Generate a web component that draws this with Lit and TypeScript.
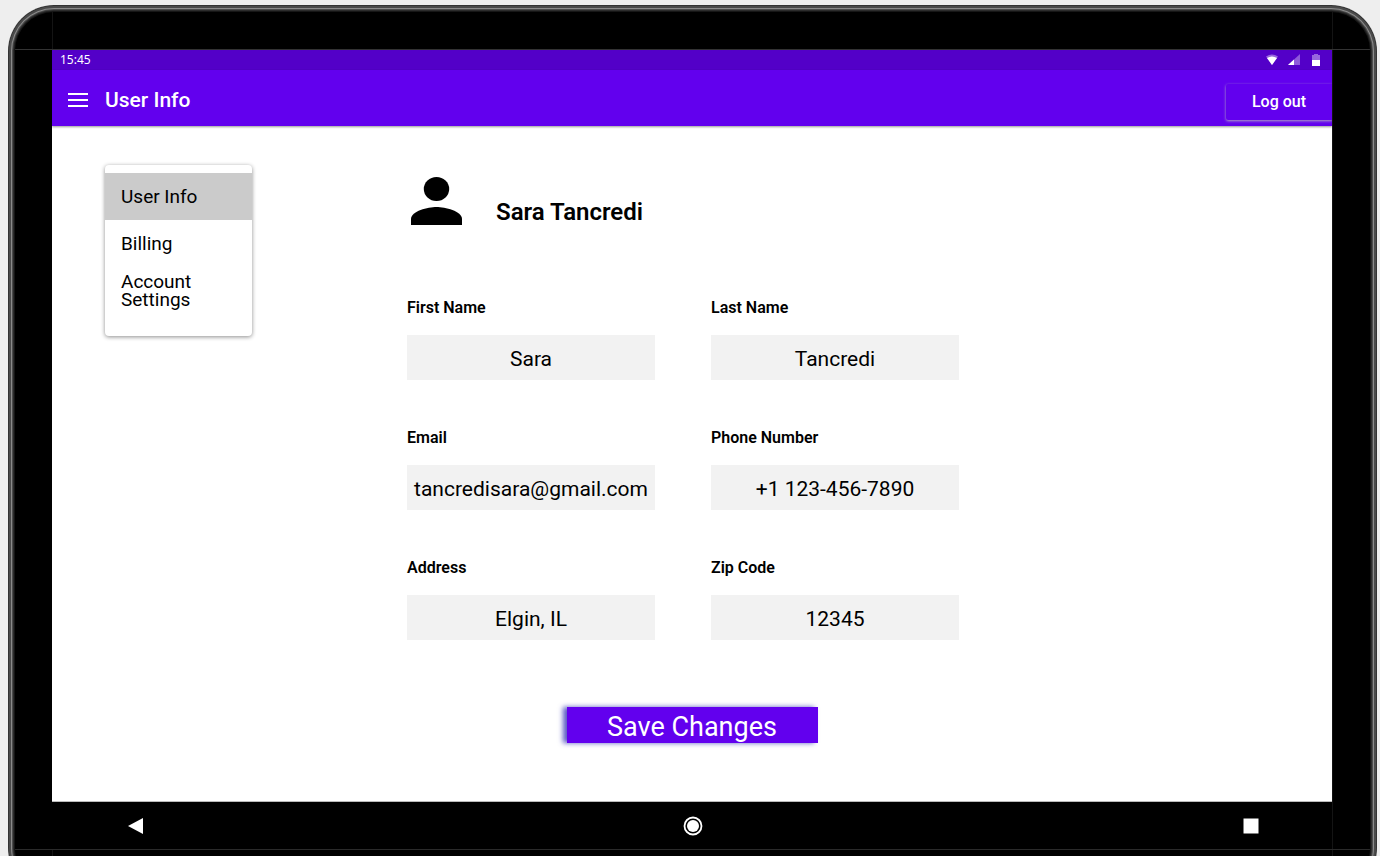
import { LitElement, html, css } from "lit";
import { customElement, state } from "lit/decorators.js";

interface Field {
  id: string;
  label: string;
  type: string;
  value: string;
}

const FIELDS: Field[] = [
  { id: "first-name", label: "First Name", type: "text", value: "Sara" },
  { id: "last-name", label: "Last Name", type: "text", value: "Tancredi" },
  { id: "email", label: "Email", type: "email", value: "tancredisara@gmail.com" },
  { id: "phone", label: "Phone Number", type: "tel", value: "+1 123-456-7890" },
  { id: "address", label: "Address", type: "text", value: "Elgin, IL" },
  { id: "zip", label: "Zip Code", type: "text", value: "12345" },
];

const SECTIONS = ["User Info", "Billing", "Account Settings"];

@customElement("status-bar")
class StatusBar extends LitElement {
  static styles = css`
    :host {
      display: flex;
      align-items: center;
      justify-content: space-between;
      height: 20px;
      padding: 0 8px;
      background: #5300c8;
      color: #fff;
      font: 12px/20px "Noto Sans", sans-serif;
    }
    .icons {
      display: flex;
      align-items: center;
      gap: 10px;
      padding-right: 2px;
    }
    svg {
      display: block;
    }
  `;

  render() {
    return html`
      <time>15:45</time>
      <div class="icons">
        <svg width="12" height="12" viewBox="0 0 12 12" aria-label="Wi-Fi">
          <path d="M0 2.6Q6-1.4 12 2.6L6 11Z" fill="#fff" opacity=".4" />
          <path d="M1 4Q6 1 11 4L6 11Z" fill="#fff" />
        </svg>
        <svg width="12" height="12" viewBox="0 0 12 12" aria-label="Signal">
          <path d="M0 11L12 0V11Z" fill="#fff" opacity=".35" />
          <path d="M0 11L6 5.5V11Z" fill="#fff" />
        </svg>
        <svg width="12" height="14" viewBox="0 0 12 14" aria-label="Battery">
          <path d="M2 2H4V1H8V2H10V7H2Z" fill="#fff" opacity=".4" />
          <path d="M2 7H10V13H2Z" fill="#fff" />
        </svg>
      </div>
    `;
  }
}

@customElement("side-menu")
class SideMenu extends LitElement {
  @state() private current = 0;

  static styles = css`
    :host {
      display: block;
      padding: 8px 0 22px;
      background: #fff;
      border-radius: 4px;
      box-shadow: 0 1px 4px rgba(0, 0, 0, 0.45);
    }
    .item {
      display: flex;
      align-items: center;
      box-sizing: border-box;
      min-height: 47px;
      padding: 0 16px;
      color: #000;
      font-size: 19px;
      line-height: 18px;
      text-decoration: none;
    }
    .active {
      background: #cbcbcb;
    }
  `;

  render() {
    return html`<nav>
      ${SECTIONS.map(
        (name, i) => html`<a
          class="item ${i === this.current ? "active" : ""}"
          href="#"
          @click=${(e: Event) => {
            e.preventDefault();
            this.current = i;
          }}
          >${name}</a
        >`
      )}
    </nav>`;
  }
}

@customElement("user-form")
class UserForm extends LitElement {
  static styles = css`
    :host {
      display: block;
    }
    .profile {
      display: flex;
      align-items: center;
      gap: 34px;
      height: 72px;
      padding-left: 4px;
    }
    .person {
      display: block;
      width: 51px;
      height: 48px;
    }
    h1 {
      margin: 0;
      padding-top: 22px;
      font-size: 24px;
      line-height: 28px;
      font-weight: 600;
    }
    .grid {
      display: grid;
      grid-template-columns: repeat(2, minmax(0, 248px));
      column-gap: 56px;
      row-gap: 48px;
      padding-top: 61px;
    }
    .field {
      display: flex;
      flex-direction: column;
      gap: 17px;
    }
    label {
      font-size: 16px;
      line-height: 20px;
      font-weight: 600;
    }
    input {
      box-sizing: border-box;
      width: 100%;
      height: 45px;
      margin: 0;
      padding: 2px 0 0;
      border: 0;
      border-radius: 0;
      background: #f2f2f2;
      color: #000;
      font: 21px/24px Roboto, sans-serif;
      text-align: center;
    }
    .actions {
      display: flex;
      justify-content: center;
      max-width: 552px;
      padding: 67px 0 0 9px;
    }
    .save {
      width: 251px;
      height: 36px;
      padding: 4px 0 0;
      border: 0;
      background: #6200ee;
      color: #fff;
      box-shadow: -4px 0 5px rgba(20, 20, 170, 0.7);
      font: 27px/32px Roboto, sans-serif;
    }
  `;

  render() {
    return html`
      <div class="profile">
        <svg class="person" viewBox="0 0 51 48" aria-hidden="true">
          <ellipse cx="25.5" cy="12" rx="12.7" ry="12" />
          <path d="M0 48V42C0 34 17 30 25.5 30S51 34 51 42V48Z" />
        </svg>
        <h1>Sara Tancredi</h1>
      </div>
      <form @submit=${(e: Event) => e.preventDefault()}>
        <div class="grid">
          ${FIELDS.map(
            (f) => html`<div class="field">
              <label for=${f.id}>${f.label}</label>
              <input id=${f.id} type=${f.type} .value=${f.value} />
            </div>`
          )}
        </div>
        <div class="actions">
          <button class="save" type="submit">Save Changes</button>
        </div>
      </form>
    `;
  }
}

@customElement("app-root")
class AppRoot extends LitElement {
  static styles = css`
    :host {
      display: block;
      box-sizing: border-box;
      height: 100vh;
      overflow: hidden;
      padding: 5px 3px 0 8px;
      background: #eee;
      color: #000;
      font-family: Roboto, sans-serif;
    }
    .device {
      display: flex;
      flex-direction: column;
      box-sizing: border-box;
      height: calc(100vh + 33px);
      padding: 44px 45px 44px 44px;
      border-radius: 46px;
      background:
        linear-gradient(#333, #333) 0 44px / 100% 1px no-repeat,
        linear-gradient(#2a2a2a, #2a2a2a) 0 calc(100% - 44px) / 100% 1px no-repeat,
        linear-gradient(#141414, #141414) 44px 0 / 1px 100% no-repeat,
        linear-gradient(#141414, #141414) calc(100% - 44px) 0 / 1px 100% no-repeat,
        #000;
      box-shadow:
        inset 0 0 0 1px #333,
        inset 0 0 0 3px #4a4a4a,
        inset 0 0 0 4px #8a8a8a,
        inset 0 0 0 5px #4c4c4c,
        inset 0 0 0 6px #2c2c2c,
        inset 0 0 0 7px #161616;
    }
    .screen {
      display: flex;
      flex-direction: column;
      flex: 1;
      min-height: 0;
      padding-top: 1px;
    }
    .appbar {
      display: flex;
      align-items: center;
      box-sizing: border-box;
      height: 56px;
      padding: 4px 0 0 16px;
      background: #6200ee;
      color: #fff;
      box-shadow: 0 1px 2px rgba(0, 0, 0, 0.4);
      z-index: 1;
    }
    .menu {
      display: block;
      padding: 0;
      border: 0;
      background: none;
    }
    .menu svg {
      display: block;
    }
    .title {
      flex: 1;
      padding-left: 17px;
      font-size: 21px;
      line-height: 24px;
      font-weight: 500;
    }
    .logout {
      width: 106px;
      height: 36px;
      margin-top: 4px;
      padding: 0;
      border: 0;
      border-radius: 2px 0 0 2px;
      background: #6200ee;
      color: #fff;
      box-shadow: 0 1px 3px rgba(190, 190, 190, 0.9);
      clip-path: inset(-4px 0 -4px -4px);
      font: 500 16px/36px Roboto, sans-serif;
    }
    .content {
      display: grid;
      grid-template-columns: 147px 1fr;
      column-gap: 155px;
      align-items: start;
      flex: 1;
      min-height: 0;
      padding: 39px 53px 0;
      background: #fff;
      border-bottom: 1px solid #bbb;
    }
    .navbar {
      display: flex;
      align-items: center;
      justify-content: space-between;
      box-sizing: border-box;
      height: 48px;
      padding: 1px 73px 0 75px;
      background: #000;
      border-bottom: 1px solid #2a2a2a;
    }
    .navbar button {
      display: block;
      padding: 0;
      border: 0;
      background: none;
    }
    .navbar svg {
      display: block;
    }
  `;

  render() {
    return html`
      <div class="device">
        <div class="screen">
          <status-bar></status-bar>
          <header class="appbar">
            <button class="menu" aria-label="Menu">
              <svg width="20" height="14" viewBox="0 0 20 14">
                <path d="M0 0H20V2H0ZM0 6H20V8H0ZM0 12H20V14H0Z" fill="#fff" />
              </svg>
            </button>
            <span class="title">User Info</span>
            <button class="logout">Log out</button>
          </header>
          <main class="content">
            <side-menu></side-menu>
            <user-form></user-form>
          </main>
          <footer class="navbar">
            <button aria-label="Back">
              <svg width="16" height="16" viewBox="0 0 16 16">
                <path d="M16 0V16L1 8Z" fill="#fff" />
              </svg>
            </button>
            <button aria-label="Home">
              <svg width="20" height="20" viewBox="0 0 20 20">
                <circle cx="10" cy="10" r="8.5" fill="none" stroke="#fff" stroke-width="1.8" />
                <circle cx="10" cy="10" r="6" fill="#fff" />
              </svg>
            </button>
            <button aria-label="Recent apps">
              <svg width="16" height="16" viewBox="0 0 16 16">
                <path d="M0.5 0.5H15.5V15.5H0.5Z" fill="#fff" />
              </svg>
            </button>
          </footer>
        </div>
      </div>
    `;
  }
}
